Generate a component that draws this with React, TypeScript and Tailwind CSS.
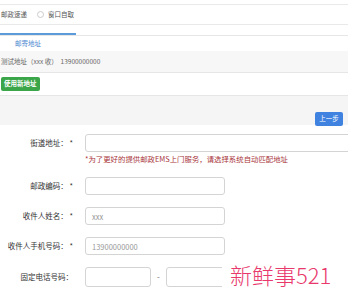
import React from "react";

const labelCls = "w-[85px] shrink-0 pr-[12px] text-right text-[7.5px] leading-none text-[#333]";
const inputCls = "h-[18px] rounded-[3px] border border-[#d4d4d4] bg-white px-[6px] text-[7.5px] text-[#999] outline-none";

function Row({ label, children, className = "" }: { label: string; children: React.ReactNode; className?: string }) {
	return (
		<div className={"flex items-center " + className}>
			<div className={labelCls}>{label}</div>
			{children}
		</div>
	);
}

export default function App() {
	return (
		<div className="relative h-[304px] w-[348px] overflow-hidden bg-white font-['Microsoft_YaHei','Noto_Sans_CJK_SC',sans-serif] text-[#333]">
			{/* delivery options */}
			<div className="pt-[4px]">
				<div className="flex h-[21px] items-center border-y border-[#e9e9e9] text-[6.5px] text-[#555]">
					<span className="ml-[1px]">邮政速递</span>
					<span className="ml-[10px] h-[7px] w-[7px] rounded-full border border-[#ccc]" />
					<span className="ml-[4px]">窗口自取</span>
				</div>
			</div>

			{/* tabs */}
			<div className="mt-[8px] flex border-b border-[#e6e6e6]">
				<div className="h-[2px] w-[76px] bg-[#5b9bd9]" />
			</div>
			<div className="flex h-[15px] items-center pl-[15px] text-[6.5px] text-[#4a86cf]">邮寄地址</div>

			{/* saved address */}
			<div className="flex h-[22px] items-center border-b border-[#e6e6e6] bg-[#f7f7f7] text-[6.5px] text-[#666]">
				<span className="ml-[1px]">测试地址（xxx 收）&nbsp; 13900000000</span>
			</div>
			<div className="flex h-[23px] items-center border-b border-[#e6e6e6]">
				<button className="ml-[1px] h-[14px] rounded-[2px] bg-[#3aa549] px-[3px] text-[6.5px] font-bold text-white">
					使用新地址
				</button>
			</div>
			<div className="relative h-[29px] bg-[#f5f5f5]">
				<button className="absolute left-[315px] top-[16px] h-[14px] w-[28px] rounded-[2px] bg-[#3f82e0] text-[6.5px] text-white">
					上一步
				</button>
			</div>

			{/* form */}
			<div className="bg-white pt-[9px]">
				<Row label="街道地址： *">
					<input className={inputCls + " w-[285px] shrink-0"} />
				</Row>
				<div className="ml-[85px] mt-[2px] text-[7.4px] leading-[10px] whitespace-nowrap text-[#a8343a]">
					*为了更好的提供邮政EMS上门服务，请选择系统自动匹配地址
				</div>
				<Row label="邮政编码： *" className="mt-[13px]">
					<input className={inputCls + " w-[140px]"} />
				</Row>
				<Row label="收件人姓名： *" className="mt-[12px]">
					<input className={inputCls + " w-[140px] bg-[#eeeeee]"} defaultValue="xxx" readOnly />
				</Row>
				<Row label="收件人手机号码： *" className="mt-[12px]">
					<input className={inputCls + " w-[140px] bg-[#eeeeee]"} defaultValue="13900000000" readOnly />
				</Row>
				<Row label="固定电话号码：" className="mt-[12px]">
					<input className={inputCls + " h-[20px] w-[66px]"} />
					<span className="mx-[6px] text-[8px] text-[#666]">-</span>
					<input className={inputCls + " h-[20px] w-[66px]"} />
				</Row>
			</div>

			{/* watermark */}
			<div className="absolute left-[222px] top-[258px] bg-white px-[8px] py-[2px] font-['Noto_Sans_CJK_SC',serif] text-[22px] font-light leading-[28px] text-[#e8386c]">
				新鲜事521
			</div>
		</div>
	);
}
